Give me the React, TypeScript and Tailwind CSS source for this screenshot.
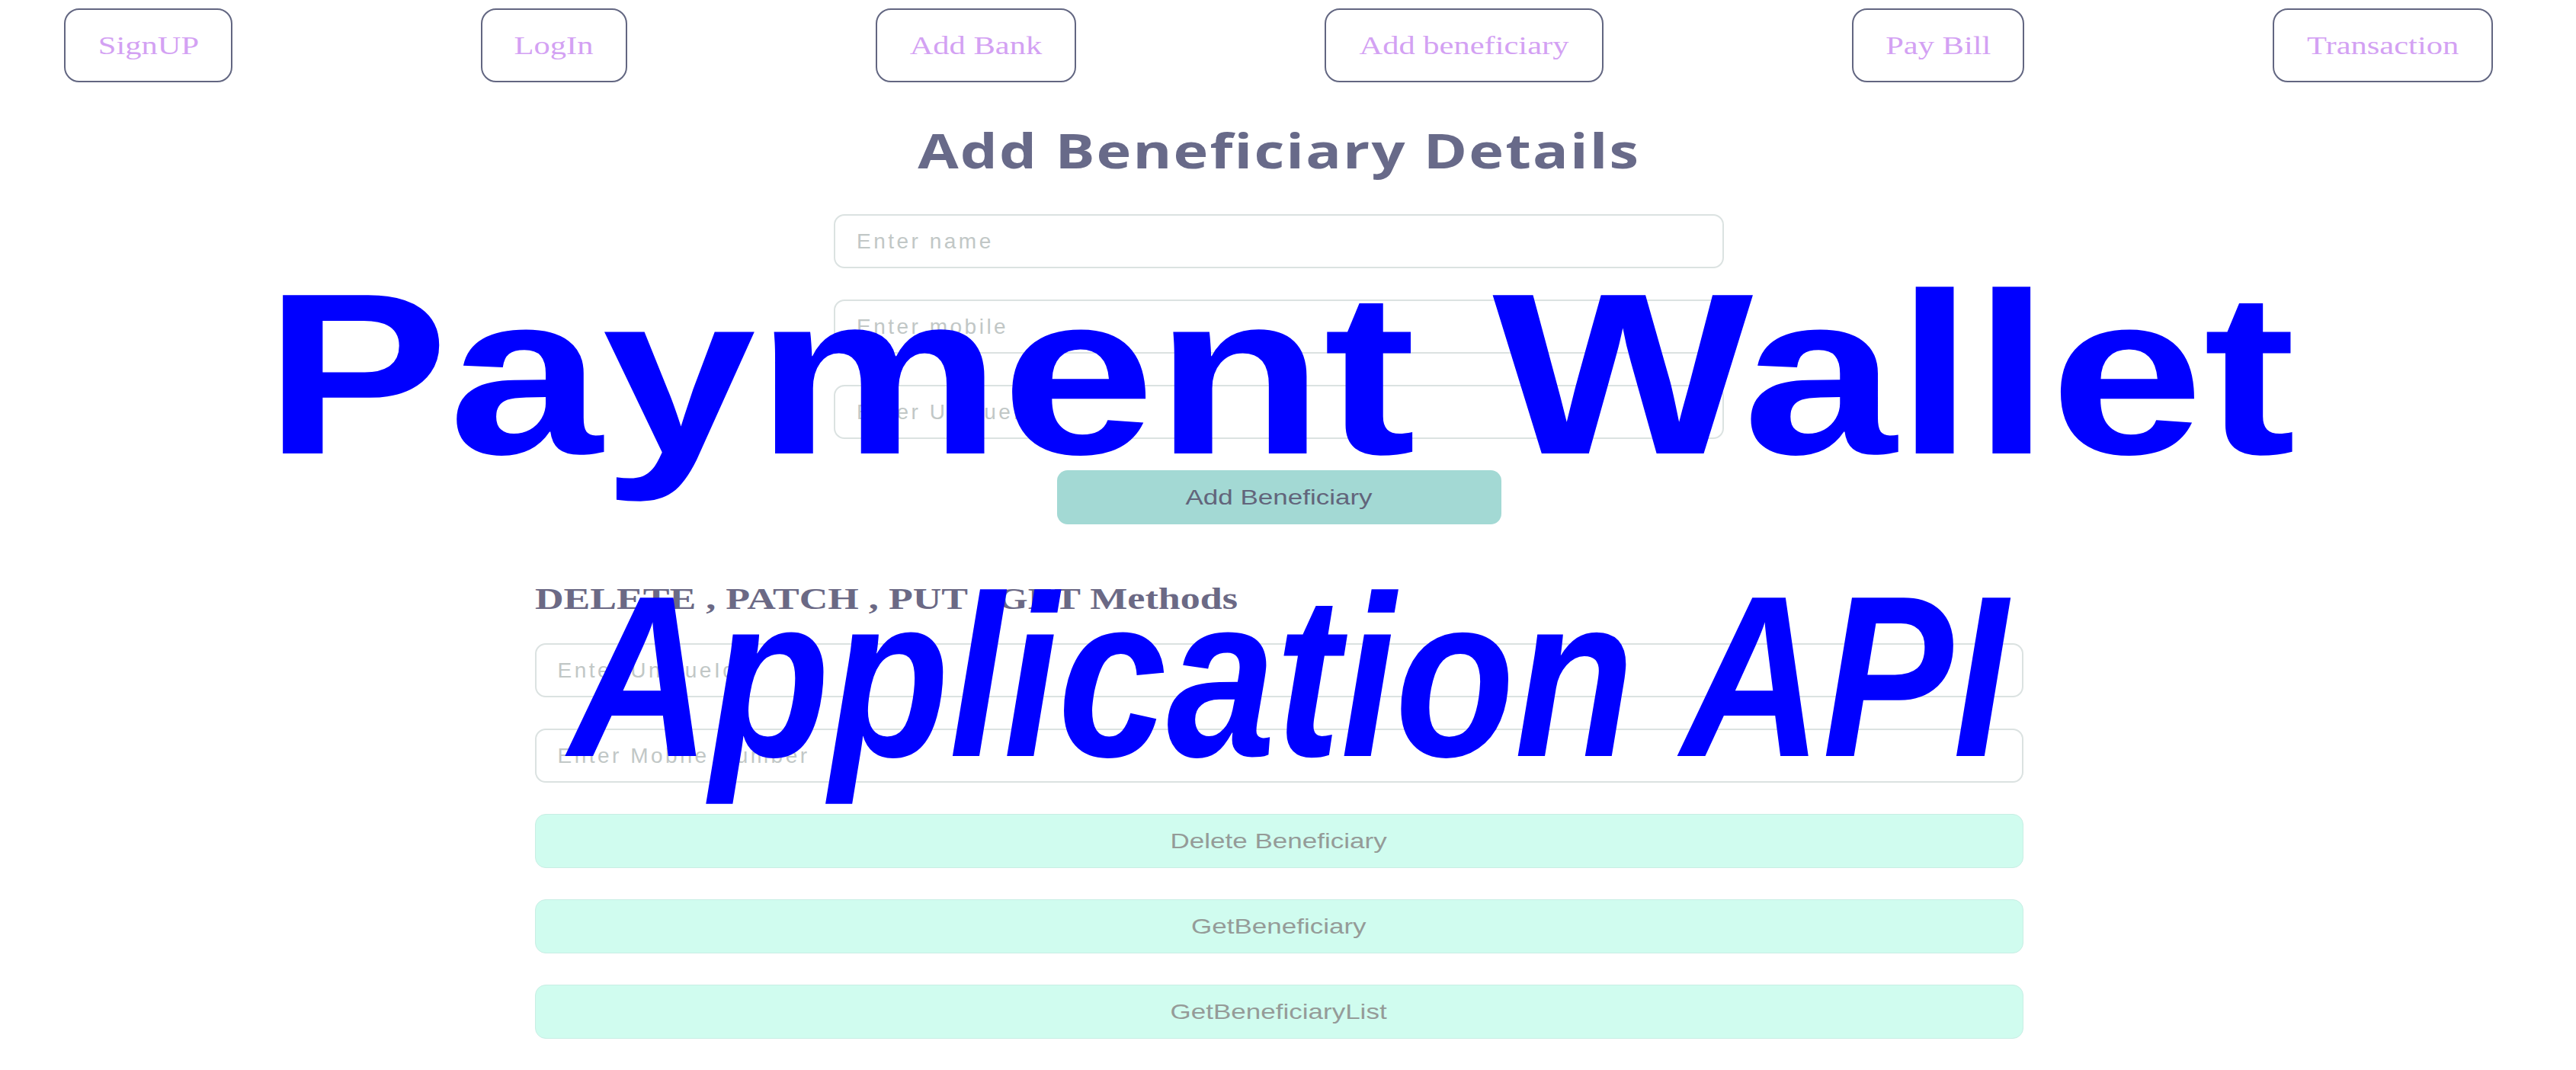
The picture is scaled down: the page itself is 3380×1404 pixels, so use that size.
import type { FC } from "react";

const navItems = [
  { label: "SignUP", width: "w-[221px]" },
  { label: "LogIn", width: "w-[192px]" },
  { label: "Add Bank", width: "w-[263px]" },
  { label: "Add beneficiary", width: "w-[366px]" },
  { label: "Pay Bill", width: "w-[226px]" },
  { label: "Transaction", width: "w-[289px]" },
];

const inputClass =
  "h-[71px] w-full rounded-[14px] border-2 border-[#dbe2e1] bg-white px-[28px] font-['Liberation_Sans',Arial,sans-serif] text-[28px] tracking-[3.5px] text-[#555] outline-none placeholder:text-[#c1c7c6]";

const NavBar: FC = () => (
  <nav className="flex gap-[326px] pl-[84px] pt-[11px]">
    {navItems.map((item) => (
      <button
        key={item.label}
        className={`${item.width} flex h-[97px] items-center justify-center rounded-[20px] border-[2.5px] border-[#626681] bg-white`}
      >
        <span className="inline-block scale-x-125 whitespace-nowrap font-['Liberation_Serif',serif] text-[34px] leading-none text-[#d3a1f3]">
          {item.label}
        </span>
      </button>
    ))}
  </nav>
);

const AddBeneficiaryForm: FC = () => (
  <section>
    <h1 className="mt-[58px] text-center font-['Open_Sans',sans-serif] text-[62px] font-bold leading-none text-[#686a89]">
      <span className="inline-block scale-x-125 tracking-[1.7px] whitespace-nowrap">
        Add Beneficiary Details
      </span>
    </h1>
    <div className="mx-auto mt-[53px] flex w-[1168px] flex-col gap-[41px]">
      <input className={inputClass} placeholder="Enter name" />
      <input className={inputClass} placeholder="Enter mobile" />
      <input className={inputClass} placeholder="Enter UniqueId" />
      <button className="mx-auto flex h-[71px] w-[583px] items-center justify-center rounded-[14px] bg-[#a3d9d4]">
        <span className="inline-block scale-x-125 font-['Liberation_Sans',Arial,sans-serif] text-[28px] leading-none text-[#62657b]">
          Add Beneficiary
        </span>
      </button>
    </div>
  </section>
);

const MethodsForm: FC = () => (
  <section className="mx-auto w-[1953px]">
    <h2 className="mt-[77px] font-['Liberation_Serif',serif] text-[41px] font-bold leading-none text-[#6b6985]">
      <span className="inline-block origin-left scale-x-[1.27] whitespace-nowrap">
        DELETE , PATCH , PUT , GET Methods
      </span>
    </h2>
    <div className="mt-[38px] flex flex-col gap-[41px]">
      <input className={inputClass} placeholder="Enter UniqueId" />
      <input className={inputClass} placeholder="Enter Mobile Number" />
      {["Delete Beneficiary", "GetBeneficiary", "GetBeneficiaryList"].map((label) => (
        <button
          key={label}
          className="flex h-[71px] w-full items-center justify-center rounded-[14px] border border-[#c8eee4] bg-[#d0fcef]"
        >
          <span className="inline-block scale-x-125 font-['Liberation_Sans',Arial,sans-serif] text-[28px] leading-none text-[#959b98]">
            {label}
          </span>
        </button>
      ))}
    </div>
  </section>
);

export default function App() {
  return (
    <div className="relative h-[1404px] w-full overflow-hidden bg-white">
      <div className="w-[3356px]">
        <NavBar />
        <AddBeneficiaryForm />
        <MethodsForm />
      </div>

      {/* banner title laid over the page */}
      <div className="pointer-events-none absolute inset-x-0 top-[340px] flex flex-col items-center gap-[95px] font-['Liberation_Sans',Arial,sans-serif] text-[302px] font-bold leading-none text-[#0000ff]">
        <span className="inline-block -translate-x-[11px] scale-x-[1.2] whitespace-nowrap">Payment Wallet</span>
        <span className="inline-block scale-x-[0.85] whitespace-nowrap italic">Application API</span>
      </div>
    </div>
  );
}
